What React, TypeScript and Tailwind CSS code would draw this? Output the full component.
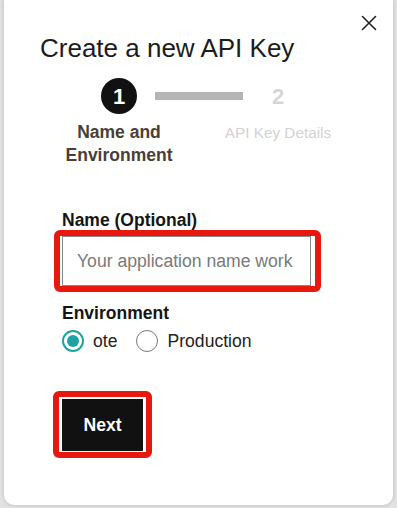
import React from "react";

export default function App() {
  return (
    <div
      className="w-[397px] h-[508px] bg-[#e2e2e2] px-[4px] pb-[3px] overflow-hidden"
      style={{ fontFamily: '"Liberation Sans", Arial, sans-serif' }}
    >
      <div className="relative h-[505px] bg-white rounded-b-[10px] shadow-[0_0_4px_rgba(0,0,0,0.18)] flex flex-col">
        <button className="absolute left-[357px] top-[15px] w-[16px] h-[16px]" aria-label="Close">
          <svg width="16" height="16" viewBox="0 0 16 16">
            <path d="M1.5 1.5 L14.5 14.5 M14.5 1.5 L1.5 14.5" stroke="#222" strokeWidth="1.6" strokeLinecap="round" />
          </svg>
        </button>

        <h1 className="pt-[33px] pl-[36px] text-[26px] leading-[30px] text-[#1c1c1c] font-normal">
          Create a new API Key
        </h1>

        <div className="mt-[15px] flex items-center pl-[97px]">
          <div className="w-[36px] h-[36px] rounded-full bg-[#111] text-white flex items-center justify-center text-[22px] font-bold">
            1
          </div>
          <div className="ml-[18px] w-[88px] h-[8px] bg-[#b5b5b5]" />
          <div className="w-[70px] text-center text-[22px] font-bold text-[#d6d6d6]">2</div>
        </div>

        <div className="mt-[7px] flex pl-[55px]">
          <div className="w-[120px] text-center text-[17.5px] leading-[23px] font-bold text-[#4a3f37]">
            Name and
            <br />
            Environment
          </div>
          <div className="ml-[29px] w-[140px] text-center text-[15.3px] leading-[23px] text-[#d2d2d2]">
            API Key Details
          </div>
        </div>

        <div className="mt-[44px] pl-[58px] text-[17.5px] leading-[19px] font-bold text-[#151515]">
          Name (Optional)
        </div>
        <div className="ml-[50px] w-[267px] h-[62px] border-[6px] border-[#e8180f] rounded-[6px] pl-[2px] pr-[4px]">
          <input
            className="w-full h-full border border-[#8a8a8a] bg-white pl-[14px] text-[17.6px] text-[#333] placeholder:text-[#7a7a7a] outline-none"
            placeholder="Your application name work"
            style={{ fontFamily: '"Liberation Sans", Arial, sans-serif' }}
          />
        </div>

        <div className="mt-[11px] pl-[58px] text-[17.5px] leading-[20px] font-bold text-[#151515]">
          Environment
        </div>
        <div className="mt-[6px] pl-[58px] flex items-center h-[24px] text-[17.6px] text-[#222]">
          <span className="w-[22px] h-[22px] rounded-full border-[2px] border-[#1ea3a3] flex items-center justify-center">
            <span className="w-[12px] h-[12px] rounded-full bg-[#1ea3a3]" />
          </span>
          <span className="ml-[9px]">ote</span>
          <span className="ml-[19px] w-[22px] h-[22px] rounded-full border border-[#777]" />
          <span className="ml-[9px]">Production</span>
        </div>

        <div className="mt-[38px] ml-[49px] w-[99px] border-[6px] border-[#e8180f] rounded-[6px] px-[3px] pt-[2px] pb-[1px]">
          <button className="w-[81px] h-[52px] bg-[#111] text-white text-[17.6px] font-bold">
            Next
          </button>
        </div>
      </div>
    </div>
  );
}
